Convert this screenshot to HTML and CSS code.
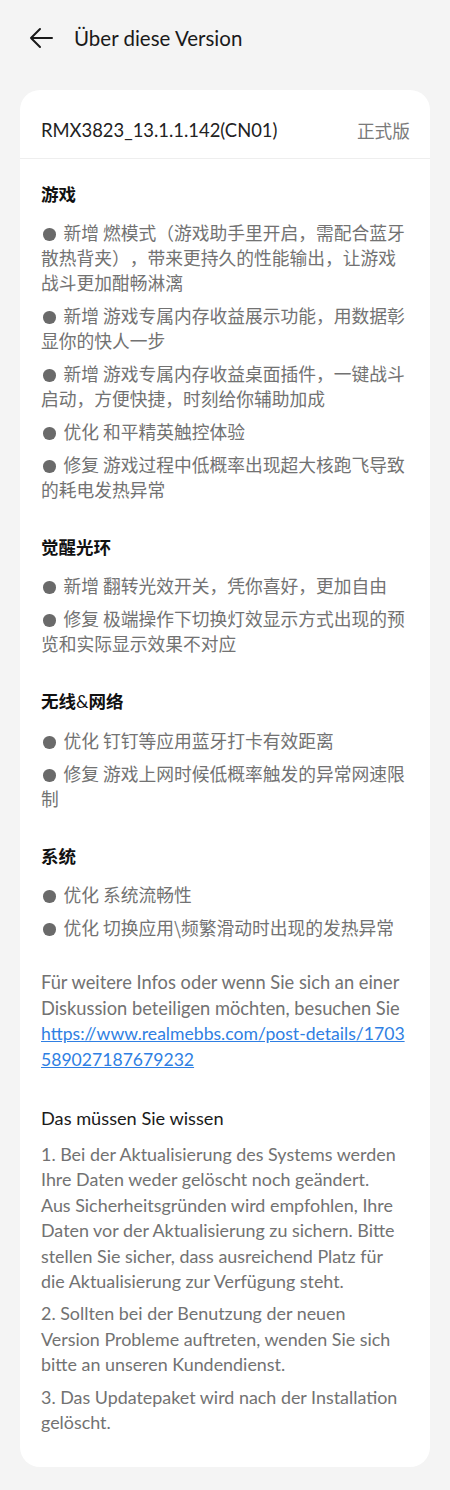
FILE: index.html
```
<!DOCTYPE html>
<html lang="de">
<head>
<meta charset="utf-8">
<title>Über diese Version</title>
<link rel="stylesheet" href="styles.css">
</head>
<body>
<header class="topbar">
  <svg class="back" width="26" height="22" viewBox="0 0 26 22" aria-hidden="true">
    <path d="M24 11H3M12 2L3 11l9 9" fill="none" stroke="#1a1a1a" stroke-width="2" stroke-linecap="round" stroke-linejoin="round"/>
  </svg>
  <h1 class="title">Über diese Version</h1>
</header>
<main class="card">
  <div class="card-head">
    <span class="ver">RMX3823_13.1.1.142(CN01)</span>
    <span class="tag">正式版</span>
  </div>
  <div class="card-body">
    <section class="sec">
      <h2 class="sec-title">游戏</h2>
      <p class="item"><span class="dot"></span>新增 燃模式（游戏助手里开启，需配合蓝牙散热背夹），带来更持久的性能输出，让游戏战斗更加酣畅淋漓</p>
      <p class="item"><span class="dot"></span>新增 游戏专属内存收益展示功能，用数据彰显你的快人一步</p>
      <p class="item"><span class="dot"></span>新增 游戏专属内存收益桌面插件，一键战斗启动，方便快捷，时刻给你辅助加成</p>
      <p class="item"><span class="dot"></span>优化 和平精英触控体验</p>
      <p class="item"><span class="dot"></span>修复 游戏过程中低概率出现超大核跑飞导致的耗电发热异常</p>
    </section>
    <section class="sec">
      <h2 class="sec-title">觉醒光环</h2>
      <p class="item"><span class="dot"></span>新增 翻转光效开关，凭你喜好，更加自由</p>
      <p class="item"><span class="dot"></span>修复 极端操作下切换灯效显示方式出现的预览和实际显示效果不对应</p>
    </section>
    <section class="sec">
      <h2 class="sec-title">无线<span class="amp">&amp;</span>网络</h2>
      <p class="item"><span class="dot"></span>优化 钉钉等应用蓝牙打卡有效距离</p>
      <p class="item"><span class="dot"></span>修复 游戏上网时候低概率触发的异常网速限制</p>
    </section>
    <section class="sec sec-last">
      <h2 class="sec-title">系统</h2>
      <p class="item"><span class="dot"></span>优化 系统流畅性</p>
      <p class="item"><span class="dot"></span>优化 切换应用\频繁滑动时出现的发热异常</p>
    </section>
    <p class="info">Für weitere Infos oder wenn Sie sich an einer Diskussion beteiligen möchten, besuchen Sie <a class="link" href="#">https://www.realmebbs.com/post-details/1703589027187679232</a></p>
    <h2 class="note-title">Das müssen Sie wissen</h2>
    <p class="note">1. Bei der Aktualisierung des Systems werden Ihre Daten weder gelöscht noch geändert. Aus&nbsp;Sicherheitsgründen wird empfohlen, Ihre Daten vor der Aktualisierung zu sichern. Bitte stellen Sie sicher, dass ausreichend Platz für die Aktualisierung zur Verfügung steht.</p>
    <p class="note">2. Sollten bei der Benutzung der neuen Version&nbsp;Probleme auftreten, wenden Sie sich bitte an unseren Kundendienst.</p>
    <p class="note">3. Das Updatepaket wird nach der Installation gelöscht.</p>
  </div>
</main>
</body>
</html>
```
FILE: styles.css
```
html, body {
  margin: 0;
  padding: 0;
  background: #f4f4f4;
}
body {
  font-family: "Lato", "Noto Sans CJK SC", sans-serif;
  color: #1a1a1a;
}
.topbar {
  display: flex;
  align-items: center;
  height: 76px;
  padding-left: 28px;
}
.back {
  display: block;
  margin-right: 20px;
}
.title {
  margin: 0;
  font-size: 20.5px;
  font-weight: 400;
  line-height: 24px;
  color: #1a1a1a;
}
.card {
  display: block;
  margin: 14px 20px 0;
  background: #ffffff;
  border-radius: 20px;
  overflow: hidden;
}
.card-head {
  display: flex;
  justify-content: space-between;
  align-items: center;
  padding: 29px 20px 17px 21px;
  line-height: 22px;
  border-bottom: 1px solid #eeeeee;
}
.ver {
  font-size: 18.4px;
  color: #222222;
}
.tag {
  font-family: "Noto Sans CJK SC", sans-serif;
  font-size: 17.7px;
  color: #7a7a7a;
}
.card-body {
  padding: 23px 20px 32px 21px;
}
.sec {
  margin-bottom: 33px;
}
.sec-last {
  margin-bottom: 30px;
}
.sec-title {
  margin: 0 0 14px;
  font-family: "Noto Sans CJK SC", sans-serif;
  font-size: 17.5px;
  line-height: 24px;
  font-weight: 700;
  color: #111111;
}
.amp {
  font-family: "Lato", sans-serif;
  font-weight: 400;
}
.item {
  margin: 8px 0 0;
  font-family: "Noto Sans CJK SC", sans-serif;
  font-size: 17.75px;
  line-height: 25px;
  color: #727272;
  text-spacing-trim: space-all;
}
.sec-title + .item {
  margin-top: 0;
}
.dot {
  display: inline-block;
  width: 12.5px;
  height: 12.5px;
  margin: 0 8px 0 2px;
  border-radius: 50%;
  background: #6a6a6a;
  vertical-align: -0.5px;
}
.info {
  margin: 0;
  font-size: 18.3px;
  line-height: 25.5px;
  color: #727272;
}
.link {
  display: block;
  font-size: 17.6px;
  color: #2f7fe3;
  text-decoration: underline;
  word-break: break-all;
}
.note-title {
  margin: 34px 0 12px;
  font-size: 18.2px;
  font-weight: 400;
  line-height: 24px;
  color: #1a1a1a;
}
.note {
  margin: 7px 0 0;
  font-size: 17.9px;
  line-height: 25.4px;
  color: #727272;
}
.note-title + .note {
  margin-top: 0;
}
```
